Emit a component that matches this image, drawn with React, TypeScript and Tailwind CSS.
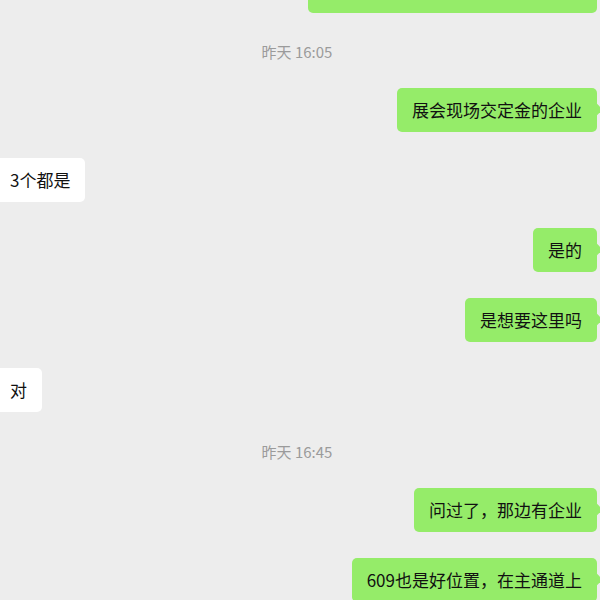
const font = { fontFamily: '"Noto Sans CJK SC", "Noto Sans", sans-serif' };

type Msg =
  | { kind: "time"; text: string; mt: string }
  | { kind: "me" | "other"; text: string; mt: string };

// the first bubble is scrolled mostly off the top; only its bottom edge shows
const messages: Msg[] = [
  { kind: "time", text: "昨天 16:05", mt: "mt-[29px]" },
  { kind: "me", text: "展会现场交定金的企业", mt: "mt-[26px]" },
  { kind: "other", text: "3个都是", mt: "mt-[26px]" },
  { kind: "me", text: "是的", mt: "mt-[26px]" },
  { kind: "me", text: "是想要这里吗", mt: "mt-[26px]" },
  { kind: "other", text: "对", mt: "mt-[26px]" },
  { kind: "time", text: "昨天 16:45", mt: "mt-[30px]" },
  { kind: "me", text: "问过了，那边有企业", mt: "mt-[26px]" },
  { kind: "me", text: "609也是好位置，在主通道上", mt: "mt-[26px]" },
];

function Bubble({ msg }: { msg: Msg }) {
  if (msg.kind === "time") {
    return (
      <div className={`${msg.mt} h-[20px] flex items-center justify-center`}>
        <span className="text-[15px] text-[#9b9b9b] leading-[20px] ml-[-6px]">{msg.text}</span>
      </div>
    );
  }
  const mine = msg.kind === "me";
  return (
    <div className={`${msg.mt} flex ${mine ? "justify-end pr-[3px]" : "justify-start ml-[-5px]"}`}>
      <div
        className={`relative h-[44px] flex items-center px-[15px] rounded-[5px] text-[17px] text-[#111111] whitespace-nowrap ${
          mine ? "bg-[#95ec69]" : "bg-white"
        }`}
      >
        {msg.text}
        {mine && (
          <span className="absolute right-[-4px] top-[17px] w-[9px] h-[9px] rotate-45 bg-[#95ec69]" />
        )}
      </div>
    </div>
  );
}

export default function App() {
  return (
    <div className="w-[600px] h-[600px] overflow-hidden bg-[#ededed]" style={font}>
      <div className="flex flex-col">
        <div className="flex justify-end pr-[3px] mt-[-31px]">
          <div className="h-[44px] w-[289px] rounded-[5px] bg-[#95ec69]" />
        </div>
        {messages.map((m, i) => (
          <Bubble key={i} msg={m} />
        ))}
      </div>
    </div>
  );
}
